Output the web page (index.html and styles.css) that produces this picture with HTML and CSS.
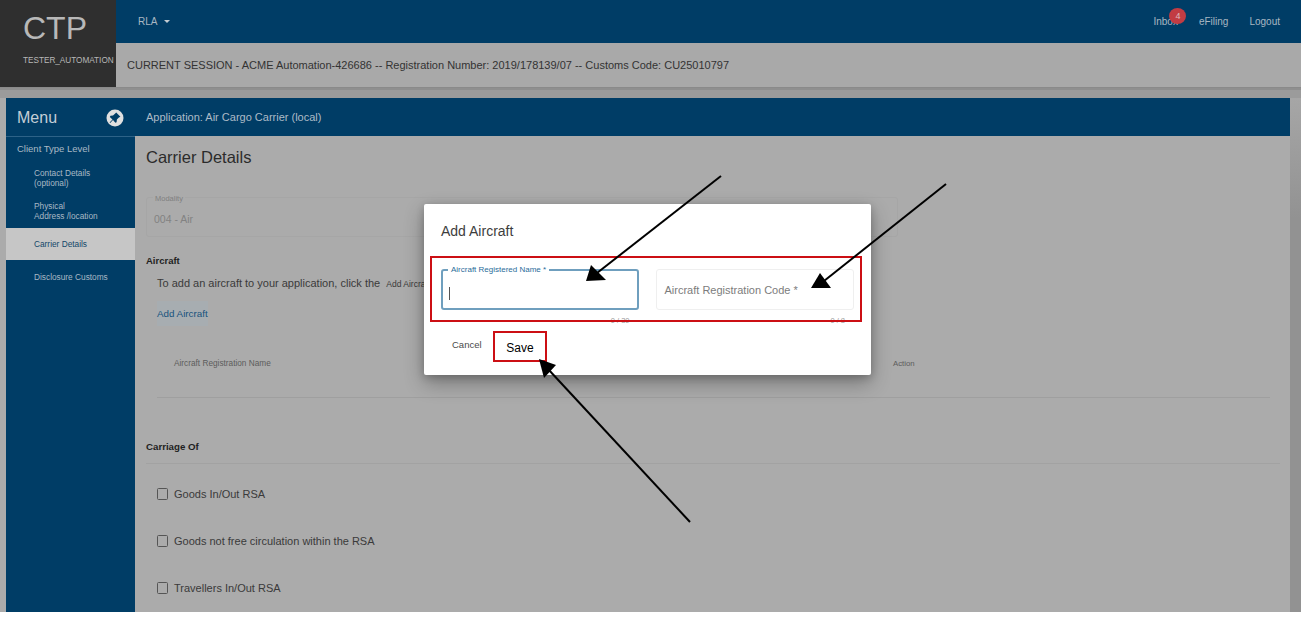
FILE: index.html
```html
<!DOCTYPE html>
<html lang="en">
<head>
<meta charset="utf-8">
<title>Add Aircraft</title>
<link rel="stylesheet" href="styles.css">
</head>
<body>
<div class="shot">
  <div class="app">
    <header class="top">
      <div class="brand">
        <div class="brand-name">CTP</div>
        <div class="brand-user">TESTER_AUTOMATION</div>
      </div>
      <div class="top-main">
        <nav class="navbar">
          <div class="nav-left">RLA <span class="caret"></span></div>
          <div class="nav-right">
            <span class="nav-link inbox">Inbox<span class="badge">4</span></span>
            <span class="nav-link">eFiling</span>
            <span class="nav-link">Logout</span>
          </div>
        </nav>
        <div class="session">CURRENT SESSION - ACME Automation-426686 -- Registration Number: 2019/178139/07 -- Customs Code: CU25010797</div>
      </div>
    </header>
    <div class="workspace">
      <aside class="sidebar">
        <div class="menu-head">
          <span>Menu</span>
          <svg class="pin" viewBox="0 0 18 18" width="18" height="18" aria-hidden="true">
            <circle cx="9" cy="9" r="8.5" fill="#e0e0e0"/>
            <path d="M10.2 3.6l4.2 4.2-1.5.7-2 2.1-.3 2.6-1.2.6L7 10.9l-2.8 3-.6-.5 2.9-2.9L3.8 7.9l.7-1.2 2.5-.3 2.2-1.9z" fill="#003d66"/>
          </svg>
        </div>
        <div class="menu-group">Client Type Level</div>
        <div class="menu-item two">Contact Details<br>(optional)</div>
        <div class="menu-item two phys">Physical<br>Address /location</div>
        <div class="menu-item active">Carrier Details</div>
        <div class="menu-item disc">Disclosure Customs</div>
      </aside>
      <main class="content">
        <div class="app-head">Application: Air Cargo Carrier (local)</div>
        <div class="body">
          <h1 class="title">Carrier Details</h1>
          <div class="outline">
            <span class="outline-label">Modality</span>
            <span class="outline-value">004 - Air</span>
          </div>
          <h2 class="section first">Aircraft</h2>
          <p class="hint">To add an aircraft to your application, click the <span class="hint-small">Add Aircraft</span></p>
          <div class="add-btn">Add Aircraft</div>
          <div class="table-head">
            <span>Aircraft Registration Name</span>
            <span class="action">Action</span>
          </div>
          <h2 class="section carriage">Carriage Of</h2>
          <label class="check first-check"><span class="box"></span>Goods In/Out RSA</label>
          <label class="check"><span class="box"></span>Goods not free circulation within the RSA</label>
          <label class="check"><span class="box"></span>Travellers In/Out RSA</label>
        </div>
      </main>
      <div class="scrollbar"></div>
    </div>
    <div class="modal">
      <div class="modal-title">Add Aircraft</div>
      <div class="fields">
        <div class="field focused">
          <span class="field-label">Aircraft Registered Name *</span>
          <span class="cursor"></span>
          <span class="counter">0 / 30</span>
        </div>
        <div class="field">
          <span class="field-ph">Aircraft Registration Code *</span>
          <span class="counter">0 / 8</span>
        </div>
      </div>
      <div class="modal-actions">
        <span class="cancel">Cancel</span>
      </div>
    </div>
  </div>
  <div class="note-box box-fields"></div>
  <div class="note-box box-save">Save</div>
  <svg class="arrows" viewBox="0 0 1302 617" width="1302" height="617" aria-hidden="true">
    <g stroke="#000" stroke-width="2" fill="none">
      <line x1="721" y1="176" x2="597" y2="273"/>
      <line x1="946" y1="184" x2="824" y2="281"/>
      <line x1="690" y1="522" x2="548" y2="369"/>
    </g>
    <polygon points="586,281 591,265 606,280" fill="#000"/>
    <polygon points="811,288 820,273 831,288" fill="#000"/>
    <polygon points="539,359 556,365 544,378" fill="#000"/>
  </svg>
</div>
</body>
</html>
```
FILE: styles.css
```css
* { box-sizing: border-box; }
html, body { margin: 0; padding: 0; background: #fff; }
body { font-family: "Liberation Sans", Arial, sans-serif; }

.shot { position: relative; width: 1302px; height: 617px; overflow: hidden; }
.app {
  position: relative;
  width: 1301px;
  height: 612px;
  background: #ababab;
  overflow: hidden;
}

.top { display: flex; height: 87px; box-shadow: 0 1px 0 #8a8a8a, 0 3px 0 #8f8f8f, 0 11px 0 #9b9b9b; }
.brand { width: 116px; background: #2f2f2f; color: #b8b8b8; flex: none; overflow: hidden; }
.brand-name { font-size: 32px; line-height: 36px; margin: 10px 0 0 23px; }
.brand-user { font-size: 8.2px; line-height: 10px; margin: 10px 0 0 23px; white-space: nowrap; }
.top-main { flex: 1; display: flex; flex-direction: column; background: #a9a9a9; }
.navbar {
  height: 43px;
  background: #003d66;
  color: #a9b7c2;
  font-size: 10px;
  display: flex;
  align-items: center;
  justify-content: space-between;
  padding: 0 21px 0 22px;
}
.nav-left { display: flex; align-items: center; gap: 7px; }
.caret { width: 0; height: 0; border-left: 3.5px solid transparent; border-right: 3.5px solid transparent; border-top: 3.5px solid #c4ccd2; }
.nav-right { display: flex; gap: 21px; align-items: center; }
.nav-link { position: relative; }
.badge {
  position: absolute;
  top: -8px;
  left: 16px;
  width: 17px;
  height: 16px;
  border-radius: 50%;
  background: #c23c43;
  color: #dcbcbe;
  text-align: center;
  font-size: 9px;
  line-height: 16px;
}
.session {
  height: 44px;
  padding-left: 11px;
  display: flex;
  align-items: center;
  font-size: 11px;
  color: #333;
  white-space: nowrap;
}

.workspace { position: relative; display: flex; margin: 11px 0 0 6px; height: 514px; }
.sidebar { width: 129px; flex: none; background: #003d66; color: #a9b9c5; }
.menu-head {
  height: 39px;
  padding: 1px 11px 0;
  display: flex;
  align-items: center;
  justify-content: space-between;
  font-size: 16px;
  color: #c4ced6;
  border-bottom: 1px solid #2d6287;
}
.menu-group { font-size: 9.5px; padding: 6px 0 0 11px; line-height: 12px; }
.menu-item { font-size: 8.3px; line-height: 10px; padding-left: 28px; }
.menu-item.two { margin-top: 13px; }
.menu-item.phys { margin-top: 13px; }
.menu-item.active {
  margin-top: 7px;
  height: 32px;
  line-height: 33px;
  background: #c6c6c6;
  color: #124669;
}
.menu-item.disc { margin-top: 12px; }

.content { flex: 1; min-width: 0; display: flex; flex-direction: column; }
.app-head {
  height: 38px;
  flex: none;
  background: #003d66;
  color: #adbbc6;
  font-size: 11px;
  display: flex;
  align-items: center;
  padding-left: 11px;
}
.body { flex: 1; padding: 11px 10px 0 11px; color: #3a3a3a; }
.title { margin: 0; font-size: 16.5px; font-weight: 400; line-height: 20px; color: #2b2b2b; }
.outline {
  position: relative;
  margin-top: 30px;
  width: 752px;
  height: 40px;
  border: 1px solid #a6a6a6;
  border-radius: 3px;
}
.outline-label { position: absolute; top: -4px; left: 6px; padding: 0 2px; background: #ababab; font-size: 7.5px; line-height: 9px; color: #808080; }
.outline-value { position: absolute; left: 7px; top: 15px; font-size: 10.5px; line-height: 13px; color: #828282; }
.section { margin: 0; font-size: 9.5px; font-weight: 700; color: #1f1f1f; line-height: 12px; }
.section.first { margin-top: 18px; }
.hint { margin: 9px 0 0 11px; font-size: 11px; line-height: 14px; color: #3a3a3a; white-space: nowrap; }
.hint-small { font-size: 8.5px; margin-left: 3px; }
.add-btn {
  margin: 10px 0 0 11px;
  width: 51px;
  height: 25px;
  line-height: 25px;
  font-size: 9.8px;
  white-space: nowrap;
  color: #17527c;
  background: #a7adb1;
}
.table-head {
  position: relative;
  margin: 0 10px 0 11px;
  height: 72px;
  padding: 33px 0 0 17px;
  font-size: 8.25px;
  line-height: 10px;
  color: #5c5c5c;
  border-bottom: 1px solid #9f9f9f;
}
.action { position: absolute; left: 736px; top: 33px; font-size: 7.8px; }
.section.carriage {
  margin-top: 0;
  padding: 43px 0 10px 0;
  box-sizing: content-box;
  font-size: 9.7px;
  border-bottom: 1px solid #a2a2a2;
}
.check { display: flex; align-items: center; margin: 33px 0 0 11px; height: 14px; font-size: 11px; color: #3a3a3a; }
.check.first-check { margin-top: 23px; }
.box { width: 11px; height: 12px; border: 1px solid #555; border-radius: 1.5px; margin-right: 6px; flex: none; }

.scrollbar {
  width: 11px;
  flex: none;
  background: linear-gradient(#a6a6a6, #929292 120px);
}

.modal {
  position: absolute;
  left: 424px;
  top: 204px;
  width: 447px;
  height: 171px;
  background: #fff;
  border-radius: 2px;
  box-shadow: 0 8px 20px rgba(0,0,0,.3), 0 2px 8px rgba(0,0,0,.2);
  padding: 0 17px;
}
.modal-title { font-size: 14px; line-height: 18px; padding-top: 18px; color: #3d3d3d; height: 65px; }
.fields { display: flex; gap: 17px; }
.field {
  position: relative;
  width: 199px;
  height: 41px;
  border: 1px solid #efefef;
  border-radius: 3px;
}
.field.focused { width: 198px; border: 2px solid #6f9fbe; }
.field-label {
  position: absolute;
  top: -6px;
  left: 5px;
  padding: 0 3px;
  background: #fff;
  color: #2a6c9a;
  font-size: 8px;
  line-height: 9px;
  white-space: nowrap;
}
.field-ph { position: absolute; left: 8px; top: 13px; font-size: 11px; line-height: 14px; color: #7c7c7c; white-space: nowrap; }
.cursor { position: absolute; left: 6px; top: 16px; width: 1px; height: 13px; background: #555; }
.counter { position: absolute; right: 8px; top: 46px; font-size: 7.5px; line-height: 9px; color: #9a9a9a; }
.field.focused .counter { right: 7px; top: 45px; }
.modal-actions { padding: 29px 0 0 11px; }
.cancel { font-size: 9.5px; line-height: 12px; color: #4a4a4a; display: block; }

.note-box { position: absolute; border: 2px solid #cc0f14; }
.box-fields { left: 430px; top: 256px; width: 432px; height: 66px; }
.box-save {
  left: 493px;
  top: 331px;
  width: 54px;
  height: 31px;
  font-size: 12px;
  line-height: 31px;
  text-align: center;
  color: #000;
  background: #fff;
}
.arrows { position: absolute; left: 0; top: 0; pointer-events: none; }
```
